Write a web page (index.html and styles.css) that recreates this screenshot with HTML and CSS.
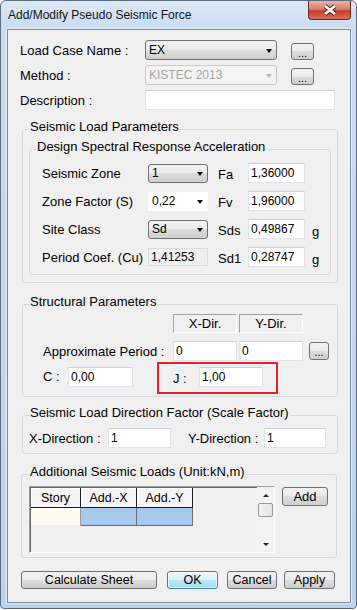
FILE: index.html
```html
<!DOCTYPE html>
<html lang="en">
  <head>
    <meta charset="UTF-8" />
    <meta name="viewport" content="width=device-width, initial-scale=1.0" />
    <title>Add/Modify Pseudo Seismic Force</title>
    <link rel="stylesheet" href="styles.css">
  </head>
  <body>
    <div class="window">
      <div class="titlebar">
        <span class="title">Add/Modify Pseudo Seismic Force</span>
        <button class="close-btn" title="Close">
          <svg width="16" height="12" viewBox="0 0 16 12">
            <path d="M3 2 L13 10 M13 2 L3 10" stroke="#4a1a14" stroke-width="4.6" />
            <path d="M3 2 L13 10 M13 2 L3 10" stroke="#ffffff" stroke-width="2.8" />
          </svg>
        </button>
      </div>

      <div class="client">
        <div class="row">
          <label class="lbl-top">Load Case Name :</label>
          <div class="combo combo-case">EX<span class="arrow"></span></div>
          <button class="btn btn-dots">...</button>
        </div>
        <div class="row">
          <label class="lbl-top">Method :</label>
          <div class="combo combo-case disabled">KISTEC 2013<span class="arrow"></span></div>
          <button class="btn btn-dots">...</button>
        </div>
        <div class="row">
          <label class="lbl-top">Description :</label>
          <input type="text" class="field field-desc" value="" />
        </div>

        <!-- Seismic Load Parameters -->
        <fieldset class="group">
          <legend>Seismic Load Parameters</legend>
          <fieldset class="group group-inner">
            <legend>Design Spectral Response Acceleration</legend>
            <div class="param-row">
              <label class="lbl-param">Seismic Zone</label>
              <div class="combo combo-small">1<span class="arrow"></span></div>
              <label class="lbl-coef">Fa</label>
              <input type="text" class="field field-coef" value="1,36000" />
            </div>
            <div class="param-row">
              <label class="lbl-param">Zone Factor (S)</label>
              <div class="combo combo-small combo-flat">0,22<span class="arrow"></span></div>
              <label class="lbl-coef">Fv</label>
              <input type="text" class="field field-coef" value="1,96000" />
            </div>
            <div class="param-row">
              <label class="lbl-param">Site Class</label>
              <div class="combo combo-small">Sd<span class="arrow"></span></div>
              <label class="lbl-coef">Sds</label>
              <input type="text" class="field field-coef" value="0,49867" />
              <span class="unit">g</span>
            </div>
            <div class="param-row">
              <label class="lbl-param">Period Coef. (Cu)</label>
              <input type="text" class="field field-small readonly" value="1,41253" readonly />
              <label class="lbl-coef">Sd1</label>
              <input type="text" class="field field-coef" value="0,28747" />
              <span class="unit">g</span>
            </div>
          </fieldset>
        </fieldset>

        <!-- Structural Parameters -->
        <fieldset class="group group-struct">
          <legend>Structural Parameters</legend>
          <div class="struct-row">
            <span class="lbl-period"></span>
            <span class="dir-head">X-Dir.</span>
            <span class="dir-head">Y-Dir.</span>
          </div>
          <div class="struct-row period-row">
            <label class="lbl-period">Approximate Period :</label>
            <input type="text" class="field field-dir" value="0" />
            <input type="text" class="field field-dir" value="0" />
            <button class="btn btn-dots btn-period">...</button>
          </div>
          <div class="struct-row cj-row">
            <label class="lbl-c">C :</label>
            <input type="text" class="field field-c" value="0,00" />
            <div class="highlight">
              <label class="lbl-j">J :</label>
              <input type="text" class="field field-dir" value="1,00" />
            </div>
          </div>
        </fieldset>

        <!-- Scale factor -->
        <fieldset class="group group-scale">
          <legend>Seismic Load Direction Factor (Scale Factor)</legend>
          <div class="scale-row">
            <label class="lbl-xdir">X-Direction :</label>
            <input type="text" class="field field-xdir" value="1" />
            <label class="lbl-ydir">Y-Direction :</label>
            <input type="text" class="field field-ydir" value="1" />
          </div>
        </fieldset>

        <!-- Additional loads grid -->
        <fieldset class="group group-add">
          <legend>Additional Seismic Loads (Unit:kN,m)</legend>
          <div class="add-row">
            <div class="grid">
              <table class="grid-table">
                <tr>
                  <th class="col-story">Story</th>
                  <th class="col-add">Add.-X</th>
                  <th class="col-add">Add.-Y</th>
                </tr>
                <tr>
                  <td class="cell-story"></td>
                  <td class="cell-add"></td>
                  <td class="cell-add"></td>
                </tr>
              </table>
              <div class="scrollbar">
                <span class="sb-btn"><span class="sb-up"></span></span>
                <span class="sb-thumb"></span>
                <span class="sb-track"></span>
                <span class="sb-btn"><span class="sb-down"></span></span>
              </div>
            </div>
            <button class="btn btn-add">Add</button>
          </div>
        </fieldset>

        <div class="footer">
          <button class="btn btn-calc">Calculate Sheet</button>
          <button class="btn btn-ok">OK</button>
          <button class="btn btn-cancel">Cancel</button>
          <button class="btn btn-apply">Apply</button>
        </div>
      </div>
    </div>
  </body>
</html>
```

FILE: styles.css
```css
* {
  box-sizing: border-box;
}

html,
body {
  margin: 0;
  padding: 0;
}

body {
  background: #ffffff;
  font-family: "Liberation Sans", Arial, sans-serif;
  font-size: 13px;
  color: #000;
}

/* window frame */
.window {
  width: 357px;
  height: 609px;
  display: flex;
  flex-direction: column;
  border: 1px solid #5d6d80;
  border-radius: 6px 6px 4px 4px;
  background: linear-gradient(#dde9f6 0, #cadcf0 28px, #bcd3ec 100%);
}

.titlebar {
  height: 28px;
  display: flex;
  align-items: flex-start;
  flex-shrink: 0;
}

.title {
  font-size: 12px;
  padding: 7px 0 0 7px;
  color: #111;
}

.close-btn {
  margin-left: auto;
  margin-right: 5px;
  width: 43px;
  height: 19px;
  padding: 0;
  border: 1px solid #6a2920;
  border-top: none;
  border-radius: 0 0 4px 4px;
  background: linear-gradient(#eab3a6 0, #d9806d 45%, #c43d2b 55%, #d5725c 100%);
  display: flex;
  align-items: center;
  justify-content: center;
}

.client {
  flex: 1;
  margin: 0 5px 5px 6px;
  padding: 10px 0 0 12px;
  background: #f0f0f0;
  border: 1px solid #7b8898;
  box-shadow: 0 0 0 1px rgba(255, 255, 255, 0.55);
}

/* top rows */
.row {
  display: flex;
  align-items: center;
  height: 20px;
  margin-bottom: 5px;
}

.lbl-top {
  width: 125px;
}

/* generic controls */
.combo {
  height: 20px;
  display: flex;
  align-items: center;
  padding: 0 4px 0 3px;
  font-size: 12px;
  border: 1px solid #707070;
  border-radius: 3px;
  background: linear-gradient(#f2f2f2 0, #ebebeb 50%, #dddddd 50%, #cfcfcf 100%);
}

.combo .arrow {
  margin-left: auto;
  margin-top: 2px;
  width: 0;
  height: 0;
  border-left: 3px solid transparent;
  border-right: 3px solid transparent;
  border-top: 4px solid #000;
}

.combo.disabled {
  color: #a3a3a3;
  border-color: #c6c6c6;
  background: #f4f4f4;
}

.combo.disabled .arrow {
  border-top-color: #b5b5b5;
}

.combo-case {
  width: 132px;
}

.combo-small {
  width: 60px;
  height: 19px;
}

.combo-flat {
  border-color: #ffffff;
  border-radius: 0;
  background: #ffffff;
}

.field {
  height: 20px;
  padding: 0 2px;
  margin: 0;
  font-family: "Liberation Sans", Arial, sans-serif;
  font-size: 12px;
  color: #000;
  background: #ffffff;
  border: 1px solid #e2e3ea;
  border-top-color: #cdd0d6;
  outline: none;
}

.field.readonly {
  background: #f0f0f0;
  border-color: #dcdcdc;
}

.field-desc {
  width: 190px;
}

.btn {
  padding: 0;
  font-family: "Liberation Sans", Arial, sans-serif;
  font-size: 12.5px;
  color: #000;
  border: 1px solid #707070;
  border-radius: 3px;
  background: linear-gradient(#f2f2f2 0, #ebebeb 50%, #dddddd 50%, #cfcfcf 100%);
}

.btn-dots {
  width: 23px;
  height: 17px;
  margin-left: 14px;
  margin-top: 3px;
  font-size: 11px;
  line-height: 18px;
}

/* group boxes */
.group {
  margin: 10px 12px 0 2px;
  padding: 2px 6px 0 6px;
  border: 1px solid #d5d8dc;
  border-radius: 3px;
}

.group legend {
  padding: 0 1px 4px 1px;
  line-height: 14px;
}

.group-inner {
  margin: 0 0 7px 0;
  padding: 5px 6px 7px 6px;
}

.param-row {
  display: flex;
  align-items: center;
  height: 20px;
  padding-left: 6px;
  margin-bottom: 8px;
}

.param-row:last-child {
  margin-bottom: 0;
}

.lbl-param {
  width: 106px;
}

.lbl-coef {
  width: 30px;
  margin-left: 10px;
  padding-top: 3px;
}

.field-coef {
  width: 57px;
}

.field-small {
  width: 60px;
  height: 18px;
}

.unit {
  margin-left: 7px;
  padding-top: 4px;
}

/* structural parameters */
.group-struct {
  margin-top: 12px;
  padding: 1px 6px 9px 6px;
}

.struct-row {
  display: flex;
  align-items: center;
  padding-left: 14px;
  gap: 2px;
}

.lbl-period {
  width: 128px;
}

.dir-head {
  width: 64px;
  height: 19px;
  text-align: center;
  line-height: 18px;
  background: #f0f0f0;
  border: 1px solid #ffffff;
  border-top-color: #a0a0a0;
  border-left-color: #a0a0a0;
}

.period-row {
  height: 20px;
  margin-top: 8px;
}

.field-dir {
  width: 64px;
}

.btn-period {
  width: 20px;
  height: 18px;
  margin: 0 0 0 4px;
}

.cj-row {
  height: 20px;
  margin-top: 6px;
  align-items: flex-start;
  gap: 0;
}

.lbl-c {
  width: 25px;
  padding-top: 2px;
}

.field-c {
  width: 65px;
}

.highlight {
  display: flex;
  margin: -5px 0 -7px 24px;
  padding: 3px 13px 5px 14px;
  border: 2px solid #e8202a;
}

.lbl-j {
  width: 26px;
  padding-top: 4px;
}

/* direction factor */
.group-scale {
  margin-top: 9px;
  padding: 4px 6px 5px 6px;
}

.scale-row {
  display: flex;
  align-items: center;
  height: 20px;
}

.lbl-xdir {
  width: 79px;
}

.field-xdir {
  width: 63px;
}

.lbl-ydir {
  width: 76px;
  margin-left: 17px;
}

.field-ydir {
  width: 62px;
}

/* additional loads */
.group-add {
  margin: 11px 13px 0 1px;
  padding: 3px 6px 4px 7px;
}

.add-row {
  display: flex;
  align-items: flex-start;
}

.grid {
  width: 246px;
  height: 67px;
  display: flex;
  background: #f0f0f0;
  border: 1px solid #ffffff;
  border-top-color: #a0a0a0;
  border-left-color: #a0a0a0;
  box-shadow: inset 1px 1px 0 #696969;
}

.grid-table {
  border-collapse: separate;
  border-spacing: 0;
  margin: 1px 0 0 1px;
  align-self: flex-start;
}

.grid-table th {
  height: 20px;
  padding: 0;
  font-weight: normal;
  font-size: 12.5px;
  background: #f5f5f5;
  border-right: 1px solid #1e1e1e;
  border-bottom: 1px solid #1e1e1e;
  box-shadow: inset 1px 1px 0 #ffffff;
}

.col-story {
  width: 50px;
}

.col-add {
  width: 56px;
}

.grid-table td {
  height: 18px;
  padding: 0;
  border-right: 1px solid #6d6d6d;
  border-bottom: 1px solid #6d6d6d;
}

.cell-story {
  background: #fffaf0;
  border-right-color: #9a9a9a !important;
  border-bottom-color: #f0f0f0 !important;
}

.cell-add {
  background: #a7c9ee;
}

.scrollbar {
  width: 17px;
  margin-left: auto;
  display: flex;
  flex-direction: column;
  background: #f2f2f2;
}

.sb-btn {
  height: 16px;
  display: flex;
  align-items: center;
  justify-content: center;
}

.sb-up,
.sb-down {
  width: 0;
  height: 0;
  border-left: 3px solid transparent;
  border-right: 3px solid transparent;
}

.sb-up {
  border-bottom: 3px solid #222;
}

.sb-down {
  border-top: 3px solid #222;
}

.sb-thumb {
  height: 14px;
  margin: 0 1px;
  border: 1px solid #979797;
  border-radius: 2px;
  background: linear-gradient(90deg, #f3f3f3, #e2e2e2);
}

.sb-track {
  flex: 1;
}

.btn-add {
  width: 46px;
  height: 19px;
  margin: 1px 0 0 7px;
  font-size: 13px;
}

/* footer buttons */
.footer {
  display: flex;
  margin: 13px 0 0 1px;
}

.footer .btn {
  height: 18px;
  line-height: 16px;
}

.btn-calc {
  width: 136px;
}

.btn-ok {
  width: 51px;
  margin-left: 10px;
  border-color: #3c7fb1;
  background: linear-gradient(#eaf6fd 0, #d9f0fc 50%, #bee6fd 50%, #a7d9f5 100%);
  box-shadow: inset 0 0 0 1px rgba(255, 255, 255, 0.7);
}

.btn-cancel {
  width: 50px;
  margin-left: 9px;
}

.btn-apply {
  width: 51px;
  margin-left: 7px;
}
```
